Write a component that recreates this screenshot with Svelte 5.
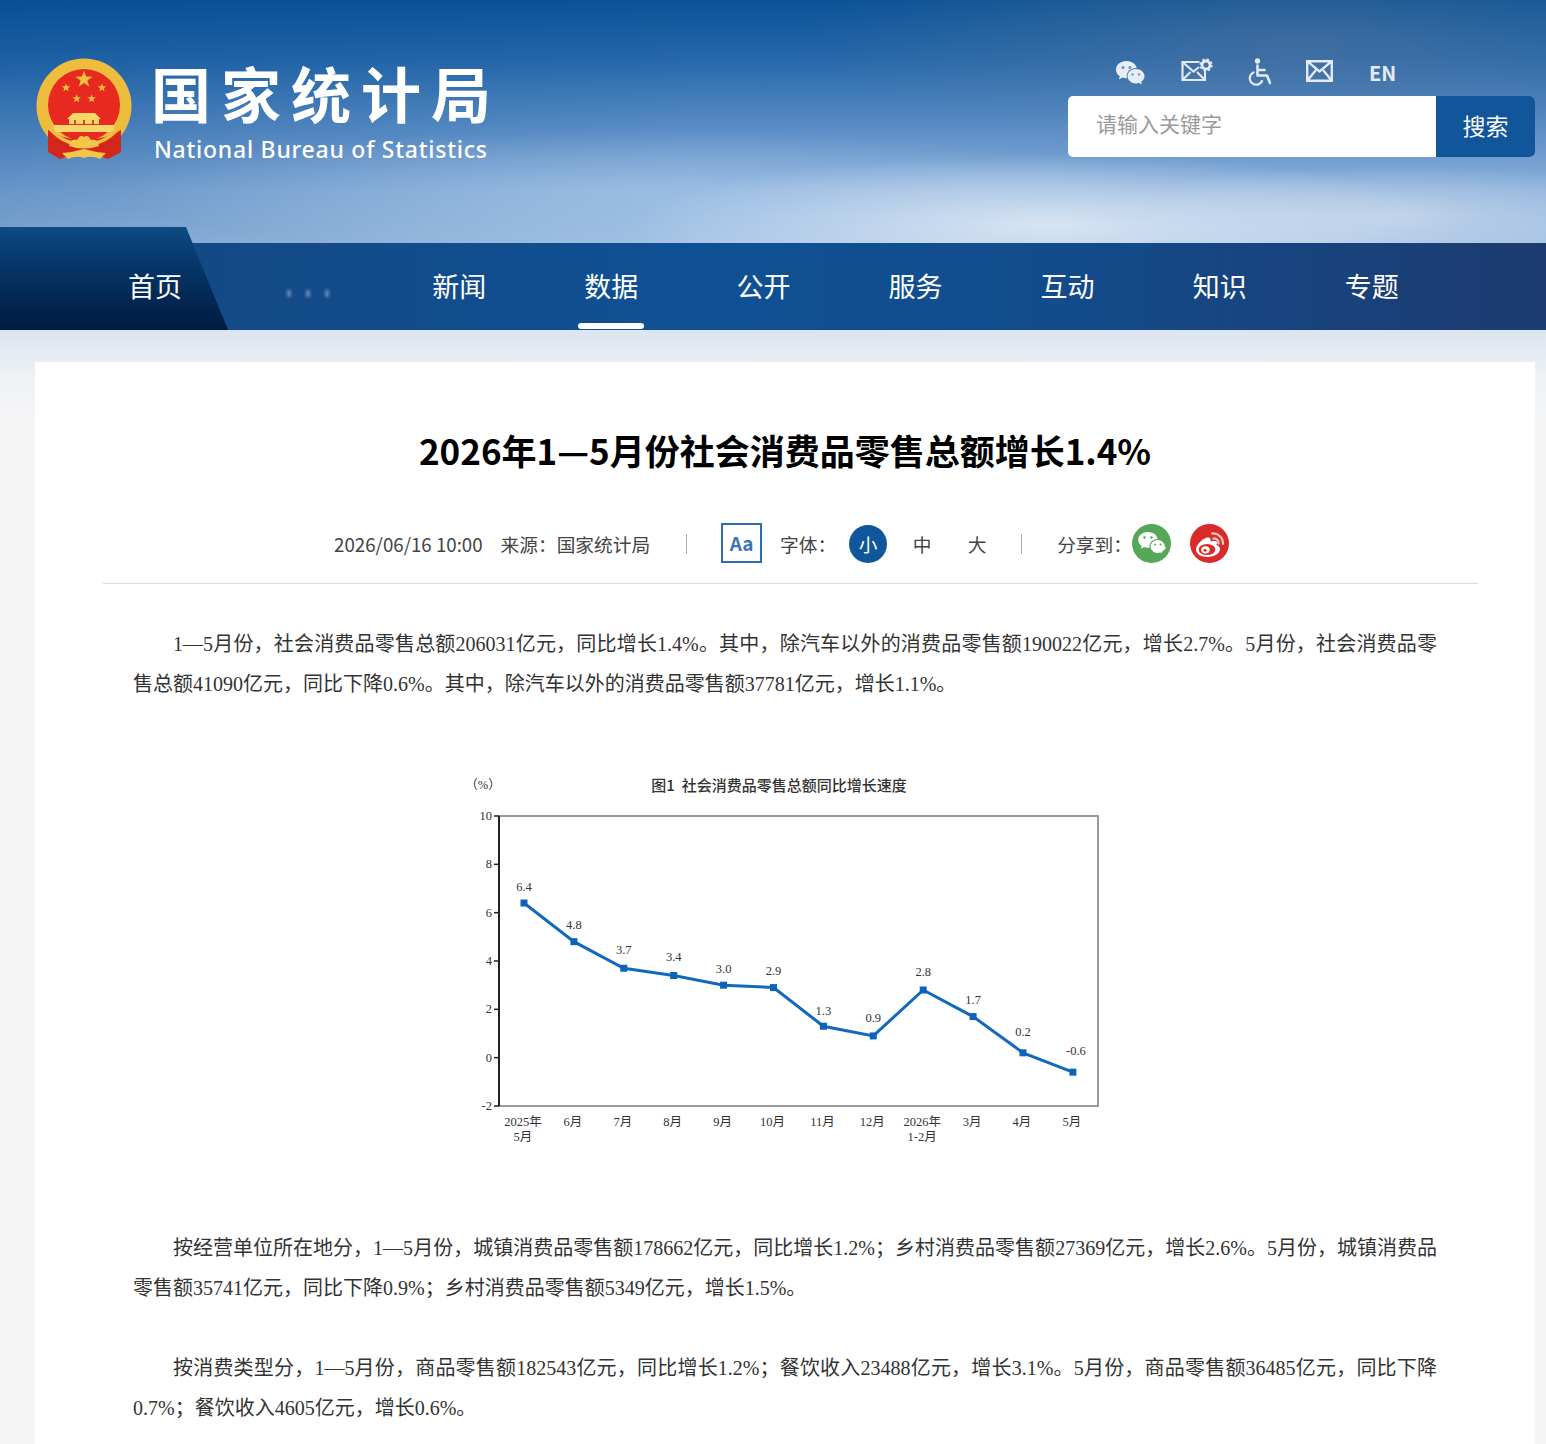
<script lang="ts">
  const navItems = [
    { label: '首页', home: true },
    { label: '', blur: true },
    { label: '新闻' },
    { label: '数据', active: true },
    { label: '公开' },
    { label: '服务' },
    { label: '互动' },
    { label: '知识' },
    { label: '专题' }
  ];

  // chart is drawn in page coordinates (see viewBox)
  const PLOT = { left: 499, right: 1098, top: 816, bottom: 1106 };
  const STEP_X = 49.9;
  const UNIT_Y = (PLOT.bottom - PLOT.top) / 12;

  // ly: baseline of the value label
  const series = [
    { v: 6.4, ly: 891, m: '2025年', m2: '5月' },
    { v: 4.8, ly: 929, m: '6月' },
    { v: 3.7, ly: 954, m: '7月' },
    { v: 3.4, ly: 961, m: '8月' },
    { v: 3.0, ly: 973, m: '9月' },
    { v: 2.9, ly: 975, m: '10月' },
    { v: 1.3, ly: 1015, m: '11月' },
    { v: 0.9, ly: 1022, m: '12月' },
    { v: 2.8, ly: 976, m: '2026年', m2: '1-2月' },
    { v: 1.7, ly: 1004, m: '3月' },
    { v: 0.2, ly: 1036, m: '4月' },
    { v: -0.6, ly: 1055, m: '5月' }
  ];

  const ticks = [10, 8, 6, 4, 2, 0, -2];

  function px(i: number) {
    return 524 + i * STEP_X;
  }
  function py(v: number) {
    return PLOT.top + (10 - v) * UNIT_Y;
  }

  const linePoints = series.map((d, i) => `${px(i)},${py(d.v)}`).join(' ');

  function star(cx: number, cy: number, r: number) {
    const pts = [];
    for (let i = 0; i < 10; i++) {
      const rad = i % 2 === 0 ? r : r * 0.4;
      const a = -Math.PI / 2 + (i * Math.PI) / 5;
      pts.push(`${(cx + rad * Math.cos(a)).toFixed(2)},${(cy + rad * Math.sin(a)).toFixed(2)}`);
    }
    return pts.join(' ');
  }
</script>

<div class="page">
  <header class="top">
    <div class="brand">
      <svg class="emblem" viewBox="0 0 96 104" aria-hidden="true">
        <circle cx="48" cy="48" r="47.500" fill="#efbd3e" />
        <circle cx="48" cy="47" r="36" fill="#e7291f" />
        <polygon points={star(48, 21.500, 9)} fill="#f0c040" />
        <polygon points={star(30, 29.700, 4.500)} fill="#f0c040" />
        <polygon points={star(66, 29.700, 4.500)} fill="#f0c040" />
        <polygon points={star(40.700, 40.700, 4.500)} fill="#f0c040" />
        <polygon points={star(55.700, 40.700, 4.500)} fill="#f0c040" />
        <g fill="#f5d668">
          <path d="M37 55 H59 L65 61 H31 Z" />
          <path d="M33 61 H63 V66 H33 Z" />
          <path d="M17 67 H79 L77 74 H19 Z" />
        </g>
        <path d="M38 62h2v4h-2zM47 62h2v4h-2zM56 62h2v4h-2z" fill="#d8432a" />
        <path d="M12 72 Q30 83 48 81 Q66 83 85 72 L85 94 L72 101 L60 97 H36 L24 101 L12 94 Z" fill="#d5261e" />
        <path d="M15 72 Q27 84 38 85 M81 72 Q69 84 58 85" fill="none" stroke="#efbd3e" stroke-width="3.500" />
        <path d="M33 88 Q35 80 41 82 Q44 76 48 79 Q52 76 55 82 Q61 80 63 88 Q48 93 33 88 Z" fill="#f3c648" />
        <path d="M26 95 Q38 94 48 91 Q58 94 70 95 L64 101 Q56 97 48 100 Q40 97 32 101 Z" fill="#f3c648" />
      </svg>
      <div class="brand-text">
        <div class="brand-cn">国家统计局</div>
        <div class="brand-en">National Bureau of Statistics</div>
      </div>
    </div>

    <div class="tools">
      <div class="tool-icons">
        <svg class="ti ti-wechat" viewBox="0 0 30 26" aria-hidden="true">
          <path d="M11.5 1C5.600 1 1 4.900 1 9.700c0 2.700 1.500 5 3.800 6.600L3.900 19.500l3.500-1.900c1.200.4 2.600.6 4 .6h.6a7.800 7.800 0 0 1-.3-2.100c0-4.500 4.200-8.100 9.400-8.100h.7C20.900 4.100 16.600 1 11.500 1Z" fill="#e8eef7" />
          <path d="M29.500 16.200c0-4-3.900-7.200-8.500-7.200s-8.500 3.200-8.500 7.200 3.900 7.200 8.500 7.200c1 0 2-.2 3-.5l2.900 1.600-.8-2.600c2-1.400 3.400-3.400 3.400-5.700Z" fill="#e8eef7" />
          <circle cx="8" cy="7.500" r="1.500" fill="#6d90bf" />
          <circle cx="15" cy="7.500" r="1.500" fill="#6d90bf" />
          <circle cx="17.500" cy="14.500" r="1.300" fill="#7b9bc6" />
          <circle cx="24" cy="14.500" r="1.300" fill="#7b9bc6" />
        </svg>
        <svg class="ti ti-mailset" viewBox="0 0 32 25" aria-hidden="true">
          <path d="M18.500 4H1.500v18h22.500V13M1.500 4l11 9.500 5.500-4.500M1.500 22l8-8M24 22l-8-8" fill="none" stroke="#e3eaf5" stroke-width="2.200" />
          <circle cx="25" cy="7" r="4" fill="none" stroke="#e3eaf5" stroke-width="2.800" />
          <circle cx="25" cy="7" r="5.800" fill="none" stroke="#e3eaf5" stroke-width="1.600" stroke-dasharray="2.400 2.150" />
        </svg>
        <svg class="ti ti-access" viewBox="0 0 23 28" aria-hidden="true">
          <circle cx="9.500" cy="3" r="2.700" fill="#e3eaf5" />
          <path d="M9.500 7.500v10h9.500l3 7.500M9.500 12h7" fill="none" stroke="#e3eaf5" stroke-width="2.600" stroke-linecap="round" stroke-linejoin="round" />
          <path d="M5.500 14.500a6.400 6.400 0 1 0 8.500 8.500" fill="none" stroke="#e3eaf5" stroke-width="2.200" stroke-linecap="round" />
        </svg>
        <svg class="ti ti-mail" viewBox="0 0 27 22" aria-hidden="true">
          <path d="M1.200 1.200h24.600v19.600H1.200ZM1.200 1.200l12.300 10.300L25.800 1.200M1.200 20.800l9-11M25.800 20.800l-9-11" fill="none" stroke="#e3eaf5" stroke-width="2.400" />
        </svg>
        <span class="en">EN</span>
      </div>
      <div class="search">
        <span class="placeholder">请输入关键字</span>
        <button class="search-btn" type="button">搜索</button>
      </div>
    </div>
  </header>

  <nav class="nav">
    <div class="home-tab"></div>
    <ul class="nav-list">
      {#each navItems as item}
        <li class="nav-item" class:active={item.active}>
          {#if item.blur}
            <span class="ghost"><i></i><i></i><i></i></span>
          {:else}
            {item.label}
          {/if}
        </li>
      {/each}
    </ul>
  </nav>

  <main class="card">
    <h1 class="title">2026年1—5月份社会消费品零售总额增长1.4%</h1>

    <div class="meta">
      <span class="date">2026/06/16 10:00</span>
      <span class="source">来源：国家统计局</span>
      <span class="sep sep-a"></span>
      <span class="aa">Aa</span>
      <span class="font-label">字体：</span>
      <span class="size size-on">小</span>
      <span class="size size-mid">中</span>
      <span class="size size-big">大</span>
      <span class="sep sep-b"></span>
      <span class="share-label">分享到：</span>
      <svg class="share" viewBox="0 0 39 39" aria-hidden="true">
        <circle cx="19.500" cy="19.500" r="19.500" fill="#55a857" />
        <path d="M16 8c-5.400 0-9.700 3.500-9.700 7.900 0 2.400 1.300 4.500 3.400 6l-.9 2.900 3.200-1.700c1.200.4 2.500.6 3.900.6 5.400 0 9.800-3.500 9.800-7.800S21.400 8 16 8Z" fill="#fff" />
        <path d="M33.500 22.500c0-3.900-3.500-7-7.800-7s-7.800 3.100-7.800 7 3.500 7 7.800 7c.9 0 1.800-.1 2.600-.4l2.700 1.500-.7-2.400c2.500-1.300 4.200-3.400 4.200-5.700Z" fill="#fff" stroke="#55a857" stroke-width="1.200" />
        <circle cx="12.500" cy="13.500" r="1.200" fill="#55a857" />
        <circle cx="19.500" cy="13.500" r="1.200" fill="#55a857" />
        <circle cx="23" cy="20.500" r="1" fill="#55a857" />
        <circle cx="28.500" cy="20.500" r="1" fill="#55a857" />
      </svg>
      <svg class="share share-last" viewBox="0 0 39 39" aria-hidden="true">
        <circle cx="19.500" cy="19.500" r="19.500" fill="#d92c2a" />
        <path d="M17.500 33C11 33 6 30 6 25.500 6 20.500 13.500 13.500 18 13.500c2.400 0 3.300 1.800 2.500 4 3.500-1.300 6.500-1.100 6.500 1.500 0 .8-.2 1.200-.6 1.900 2 .6 3.600 1.900 3.600 3.900C30 29.500 24.500 33 17.500 33Z" fill="#fff" />
        <ellipse cx="17" cy="25.500" rx="8.300" ry="5.600" fill="#d92c2a" />
        <ellipse cx="15.500" cy="25.800" rx="4.200" ry="3.600" fill="#fff" />
        <circle cx="15" cy="26.300" r="1.500" fill="#d92c2a" />
        <path d="M22 9.500a10 10 0 0 1 11 10.500M23.500 14.500a4.500 4.500 0 0 1 5 5" fill="none" stroke="#f6c9c6" stroke-width="2.200" stroke-linecap="round" />
      </svg>
    </div>

    <div class="body">
      <p>1—5月份，社会消费品零售总额206031亿元，同比增长1.4%。其中，除汽车以外的消费品零售额190022亿元，增长2.7%。5月份，社会消费品零售总额41090亿元，同比下降0.6%。其中，除汽车以外的消费品零售额37781亿元，增长1.1%。</p>

      <svg class="chart" viewBox="455 770 660 382" role="img" aria-label="图1 社会消费品零售总额同比增长速度">
        <text class="c-unit" x="483" y="789" text-anchor="middle">（%）</text>
        <text class="c-title" x="779" y="791" text-anchor="middle">图1  社会消费品零售总额同比增长速度</text>

        <rect x={PLOT.left} y={PLOT.top} width={PLOT.right - PLOT.left} height={PLOT.bottom - PLOT.top} fill="#fff" stroke="#9a9a9a" stroke-width="2" />
        <path d="M{PLOT.left} {PLOT.top}V{PLOT.bottom}" stroke="#222" stroke-width="2" />
        {#each ticks as t}
          <path d="M{PLOT.left - 5} {py(t)}H{PLOT.left}" stroke="#222" stroke-width="1.500" />
          <text class="c-num" x="492" y={py(t) + 4} text-anchor="end">{t}</text>
        {/each}

        <polyline points={linePoints} fill="none" stroke="#1169bd" stroke-width="3" />
        {#each series as d, i}
          <rect x={px(i) - 3.5} y={py(d.v) - 3.5} width="7" height="7" fill="#0c63b8" />
          <text class="c-num" x={px(i) + (d.v < 0 ? 3 : 0)} y={d.ly} text-anchor="middle">{d.v.toFixed(1)}</text>
          <text class="c-axis" x={px(i) - 1} y="1126" text-anchor="middle">{d.m}</text>
          {#if d.m2}
            <text class="c-axis" x={px(i) - 1} y="1141" text-anchor="middle">{d.m2}</text>
          {/if}
        {/each}
      </svg>

      <p>按经营单位所在地分，1—5月份，城镇消费品零售额178662亿元，同比增长1.2%；乡村消费品零售额27369亿元，增长2.6%。5月份，城镇消费品零售额35741亿元，同比下降0.9%；乡村消费品零售额5349亿元，增长1.5%。</p>

      <p>按消费类型分，1—5月份，商品零售额182543亿元，同比增长1.2%；餐饮收入23488亿元，增长3.1%。5月份，商品零售额36485亿元，同比下降0.7%；餐饮收入4605亿元，增长0.6%。</p>
    </div>
  </main>
</div>

<style>
  :global(body) {
    margin: 0;
    background: #f5f5f6;
  }

  .page {
    min-height: 100vh;
    display: flex;
    flex-direction: column;
    font-family: "Noto Sans CJK SC", "Noto Sans", sans-serif;
    color: #333;
    background:
      linear-gradient(180deg, #dbe5f0 330px, #eef1f5 375px, #f5f5f6 420px);
  }

  /* header: sky picture faked with a few soft layers */
  .top {
    height: 243px;
    box-sizing: border-box;
    display: flex;
    justify-content: space-between;
    align-items: flex-start;
    padding: 0 11px 0 36px;
    background:
      radial-gradient(ellipse 420px 70px at 1050px 225px, rgba(226, 235, 246, 0.85), transparent),
      radial-gradient(ellipse 300px 50px at 1400px 215px, rgba(205, 218, 236, 0.7), transparent),
      radial-gradient(ellipse 520px 60px at 640px 190px, rgba(180, 208, 238, 0.4), transparent),
      radial-gradient(ellipse 500px 120px at 1300px 40px, rgba(120, 130, 150, 0.35), transparent),
      linear-gradient(90deg, rgba(0, 70, 140, 0.25), rgba(0, 70, 140, 0) 45%),
      linear-gradient(180deg, #0a5297 0, #2668ab 60px, #5c8ec6 130px, #8ab0db 190px, #a3c2e4 243px);
  }

  .brand {
    display: flex;
    align-items: flex-start;
    padding-top: 58px;
    color: #fff;
  }

  .emblem {
    width: 96px;
    height: 104px;
    flex: none;
  }

  .brand-text {
    margin-left: 19px;
    margin-top: -1px;
  }

  .brand-cn {
    font-size: 60px;
    font-weight: 700;
    line-height: 70px;
    letter-spacing: 10px;
    white-space: nowrap;
  }

  .brand-en {
    font-family: "Noto Sans", sans-serif;
    font-size: 23px;
    font-weight: 500;
    line-height: 32px;
    margin-top: 6px;
    margin-left: 3px;
    letter-spacing: 0.750px;
    white-space: nowrap;
  }

  .tools {
    width: 467px;
    padding-top: 58px;
  }

  .tool-icons {
    height: 38px;
    display: flex;
    align-items: flex-start;
    padding-left: 47px;
    color: #e3eaf5;
  }

  .ti {
    flex: none;
    display: block;
  }

  .ti-wechat {
    width: 30px;
    height: 26px;
    margin-top: 2px;
  }

  .ti-mailset {
    width: 32px;
    height: 25px;
    margin-left: 36px;
  }

  .ti-access {
    width: 23px;
    height: 28px;
    margin-left: 35px;
  }

  .ti-mail {
    width: 27px;
    height: 22px;
    margin-left: 35px;
    margin-top: 2px;
  }

  .en {
    margin-left: 36px;
    margin-top: 1px;
    font-size: 20px;
    font-weight: 700;
    line-height: 28px;
  }

  .search {
    height: 61px;
    display: flex;
    border-radius: 5px;
    overflow: hidden;
    background: #fff;
  }

  .placeholder {
    flex: 1;
    padding-left: 28px;
    font-size: 21px;
    line-height: 55px;
    color: #9a9a9a;
  }

  .search-btn {
    width: 99px;
    border: 0;
    padding: 0 0 4px;
    background: #11559b;
    color: #fff;
    font: inherit;
    font-size: 23px;
  }

  .nav {
    position: relative;
    height: 87px;
    background: linear-gradient(90deg, #164680 0, #0f5094 45%, #124d8e 65%, #1d3b70 100%);
  }

  .home-tab {
    position: absolute;
    left: 0;
    top: -16px;
    width: 228px;
    height: 103px;
    clip-path: polygon(0 0, 186px 0, 228px 100%, 0 100%);
    background: linear-gradient(180deg, #0e4a85 0, #063566 40%, #001a40 100%);
  }

  .nav-list {
    position: relative;
    list-style: none;
    margin: 0;
    padding: 0 0 0 79px;
    display: grid;
    grid-template-columns: repeat(9, 152.100px);
  }

  .nav-item {
    position: relative;
    height: 87px;
    text-align: center;
    font-size: 27px;
    line-height: 86px;
    color: #fff;
  }

  .nav-item.active::after {
    content: "";
    position: absolute;
    left: 50%;
    bottom: 1px;
    width: 66px;
    height: 6px;
    margin-left: -33px;
    border-radius: 3px;
    background: #fff;
  }

  .ghost {
    display: inline-flex;
    gap: 15px;
    align-items: flex-end;
    height: 10px;
    margin-left: 2px;
  }

  .ghost i {
    width: 4px;
    height: 7px;
    background: rgba(200, 220, 245, 0.45);
    filter: blur(1.5px);
  }

  .card {
    flex: 1;
    box-sizing: border-box;
    margin: 32px 11px 0 35px;
    padding: 0 57px 0 68px;
    background: #fff;
  }

  .title {
    margin: 0;
    padding: 63px 11px 0 0;
    text-align: center;
    font-size: 35px;
    line-height: 50px;
    font-weight: 700;
    color: #000;
  }

  .meta {
    margin-top: 50px;
    height: 38px;
    padding: 0 18px 20px 0;
    display: flex;
    justify-content: center;
    align-items: center;
    font-size: 18.700px;
    line-height: 36px;
    color: #444;
    border-bottom: 1px solid #ddd;
    white-space: nowrap;
  }

  .source {
    margin-left: 18px;
  }

  .sep {
    width: 1px;
    height: 20px;
    background: #aaa;
  }

  .sep-a {
    margin-left: 36px;
  }

  .aa {
    margin-left: 34px;
    margin-top: -2px;
    width: 41px;
    height: 40px;
    box-sizing: border-box;
    border: 2px solid #2f6eae;
    text-align: center;
    font-size: 19px;
    font-weight: 700;
    line-height: 36px;
    color: #3c76b2;
  }

  .font-label {
    margin-left: 18px;
  }

  .size {
    width: 38px;
    height: 38px;
    text-align: center;
    line-height: 38px;
  }

  .size-on {
    margin-left: 13px;
    border-radius: 50%;
    background: #11559b;
    color: #fff;
  }

  .size-mid {
    margin-left: 16px;
  }

  .size-big {
    margin-left: 17px;
  }

  .sep-b {
    margin-left: 25px;
  }

  .share-label {
    margin-left: 35px;
  }

  .share {
    width: 39px;
    height: 39px;
    margin-top: -2px;
    flex: none;
  }

  .share-last {
    margin-left: 19px;
  }

  .body {
    margin-top: 40px;
    padding: 0 41px 0 30px;
    font-family: "Liberation Serif", "Noto Sans CJK SC", serif;
    font-size: 20px;
    line-height: 40px;
    color: #333;
  }

  .body p {
    margin: 0 0 40px;
    text-indent: 40px;
    text-align: justify;
  }

  .chart {
    display: block;
    width: 660px;
    height: 382px;
    margin: 66px auto 76px;
  }

  .c-title {
    font-family: "Noto Sans CJK SC", sans-serif;
    font-size: 15px;
    font-weight: 500;
    fill: #333;
    white-space: pre;
  }

  .c-unit,
  .c-num,
  .c-axis {
    font-family: "Liberation Serif", "Noto Sans CJK SC", serif;
    font-size: 12.500px;
    fill: #333;
  }
</style>
